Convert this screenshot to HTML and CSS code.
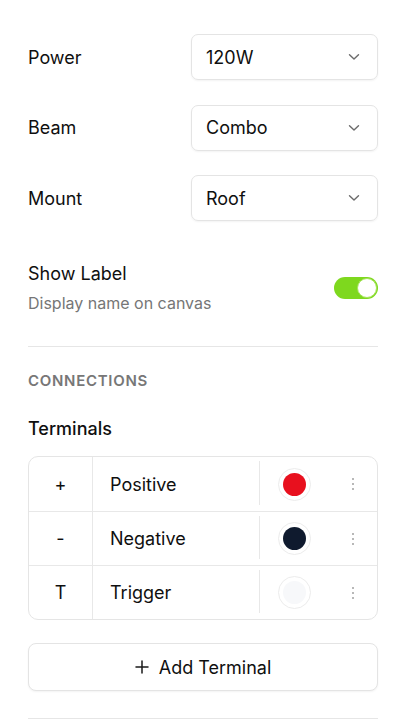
FILE: index.html
```html
<!DOCTYPE html>
<html lang="en">
<head>
<meta charset="utf-8">
<title>Properties</title>
<link rel="stylesheet" href="styles.css">
</head>
<body>
<div class="panel">
  <div class="fields">
    <div class="field">
      <span class="field-label">Power</span>
      <div class="select"><span>120W</span><svg class="chev" viewBox="0 0 12 8" width="12" height="8"><path d="M1.5 1.8 L6 6 L10.5 1.8" fill="none" stroke="#6b6b6b" stroke-width="1.4" stroke-linecap="round" stroke-linejoin="round"/></svg></div>
    </div>
    <div class="field">
      <span class="field-label">Beam</span>
      <div class="select"><span>Combo</span><svg class="chev" viewBox="0 0 12 8" width="12" height="8"><path d="M1.5 1.8 L6 6 L10.5 1.8" fill="none" stroke="#6b6b6b" stroke-width="1.4" stroke-linecap="round" stroke-linejoin="round"/></svg></div>
    </div>
    <div class="field">
      <span class="field-label">Mount</span>
      <div class="select"><span>Roof</span><svg class="chev" viewBox="0 0 12 8" width="12" height="8"><path d="M1.5 1.8 L6 6 L10.5 1.8" fill="none" stroke="#6b6b6b" stroke-width="1.4" stroke-linecap="round" stroke-linejoin="round"/></svg></div>
    </div>
  </div>

  <div class="toggle-row">
    <div class="toggle-text">
      <div class="toggle-title">Show Label</div>
      <div class="toggle-sub">Display name on canvas</div>
    </div>
    <div class="switch"><div class="knob"></div></div>
  </div>

  <div class="divider"></div>

  <div class="section-title">CONNECTIONS</div>
  <div class="sub-title">Terminals</div>

  <div class="table">
    <div class="trow">
      <div class="c-sym">+</div>
      <div class="c-name">Positive</div>
      <div class="c-color"><span class="swatch"><span class="dot red"></span></span></div>
      <div class="c-more"><svg viewBox="0 0 4 14" width="4" height="14"><circle cx="2" cy="2" r="1" fill="#a0a0a0"/><circle cx="2" cy="7" r="1" fill="#a0a0a0"/><circle cx="2" cy="12" r="1" fill="#a0a0a0"/></svg></div>
    </div>
    <div class="trow">
      <div class="c-sym">-</div>
      <div class="c-name">Negative</div>
      <div class="c-color"><span class="swatch"><span class="dot navy"></span></span></div>
      <div class="c-more"><svg viewBox="0 0 4 14" width="4" height="14"><circle cx="2" cy="2" r="1" fill="#a0a0a0"/><circle cx="2" cy="7" r="1" fill="#a0a0a0"/><circle cx="2" cy="12" r="1" fill="#a0a0a0"/></svg></div>
    </div>
    <div class="trow">
      <div class="c-sym">T</div>
      <div class="c-name">Trigger</div>
      <div class="c-color"><span class="swatch"><span class="dot light"></span></span></div>
      <div class="c-more"><svg viewBox="0 0 4 14" width="4" height="14"><circle cx="2" cy="2" r="1" fill="#a0a0a0"/><circle cx="2" cy="7" r="1" fill="#a0a0a0"/><circle cx="2" cy="12" r="1" fill="#a0a0a0"/></svg></div>
    </div>
  </div>

  <button class="add-btn"><svg viewBox="0 0 14 14" width="14" height="14"><path d="M7 1 V13 M1 7 H13" stroke="#1a1a1a" stroke-width="1.5" stroke-linecap="round"/></svg><span>Add Terminal</span></button>

  <div class="divider bottom"></div>
</div>
</body>
</html>
```

FILE: styles.css
```css
* { box-sizing: border-box; }
html, body { margin: 0; padding: 0; background: #ffffff; }
body {
  font-family: Inter, "Noto Sans", "Liberation Sans", sans-serif;
  color: #0f0f0f;
  width: 402px;
  height: 720px;
  overflow: hidden;
}
.panel {
  padding: 34px 24px 0 28px;
  display: flex;
  flex-direction: column;
}
.fields {
  display: flex;
  flex-direction: column;
  gap: 24.5px;
}
.field {
  display: flex;
  align-items: center;
  height: 46px;
}
.field-label {
  width: 163px;
  font-size: 18px;
  font-weight: 400;
}
.select {
  flex: 1;
  height: 46px;
  border: 1px solid #e4e4e4;
  border-radius: 7px;
  box-shadow: 0 1px 2px rgba(0,0,0,0.05);
  display: flex;
  align-items: center;
  justify-content: space-between;
  padding: 0 17px 0 14px;
  font-size: 18px;
  font-weight: 400;
}
.chev { display: block; }
.toggle-row {
  margin-top: 41px;
  display: flex;
  align-items: center;
  justify-content: space-between;
}
.toggle-title {
  font-size: 18px;
  font-weight: 400;
  line-height: 24px;
}
.toggle-sub {
  margin-top: 7px;
  font-size: 16px;
  line-height: 20px;
  color: #767676;
}
.switch {
  width: 44px;
  height: 22px;
  border-radius: 11px;
  background: #7ed81e;
  position: relative;
}
.knob {
  position: absolute;
  right: 1px;
  top: 1px;
  width: 20px;
  height: 20px;
  border-radius: 50%;
  background: #ffffff;
  border: 1px solid #a6e45c;
}
.divider {
  margin-top: 33px;
  height: 1px;
  background: #e6e6e6;
}
.section-title {
  margin-top: 23.5px;
  font-size: 15px;
  line-height: 20px;
  font-weight: 600;
  color: #777777;
  letter-spacing: 0.7px;
}
.sub-title {
  margin-top: 26px;
  font-size: 18px;
  line-height: 24px;
  font-weight: 500;
}
.table {
  margin-top: 15.5px;
  border: 1px solid #e5e5e5;
  border-radius: 10px;
  display: flex;
  flex-direction: column;
}
.trow {
  display: flex;
  height: 54px;
  align-items: stretch;
}
.trow + .trow { border-top: 1px solid #e8e8e8; }
.c-sym {
  width: 64px;
  border-right: 1px solid #e8e8e8;
  display: flex;
  align-items: center;
  justify-content: center;
  font-size: 18px;
  font-weight: 400;
}
.c-name {
  width: 166px;
  display: flex;
  align-items: center;
  padding-left: 17px;
  font-size: 18px;
  font-weight: 400;
}
.c-color {
  width: 70px;
  margin: 4px 0 6px;
  border-left: 1px solid #e8e8e8;
  display: flex;
  align-items: center;
  justify-content: center;
  padding-top: 2px;
}
.swatch {
  width: 33px;
  height: 33px;
  border-radius: 50%;
  border: 1px solid #ececec;
  background: #ffffff;
  display: flex;
  align-items: center;
  justify-content: center;
}
.dot {
  width: 23px;
  height: 23px;
  border-radius: 50%;
}
.dot.red { background: #e8101e; }
.dot.navy { background: #0f1a2e; }
.dot.light { background: #f7f8fa; }
.c-more {
  flex: 1;
  display: flex;
  align-items: center;
  justify-content: center;
}
.c-more svg { display: block; }
.add-btn {
  margin-top: 23px;
  height: 48px;
  border: 1px solid #e4e4e4;
  border-radius: 8px;
  background: #ffffff;
  box-shadow: 0 1px 2px rgba(0,0,0,0.05);
  display: flex;
  align-items: center;
  justify-content: center;
  gap: 10px;
  font-family: Inter, "Noto Sans", "Liberation Sans", sans-serif;
  font-size: 18px;
  font-weight: 400;
  color: #0f0f0f;
  padding: 0;
}
.add-btn svg { display: block; }
.divider.bottom { margin-top: 27px; }
```
